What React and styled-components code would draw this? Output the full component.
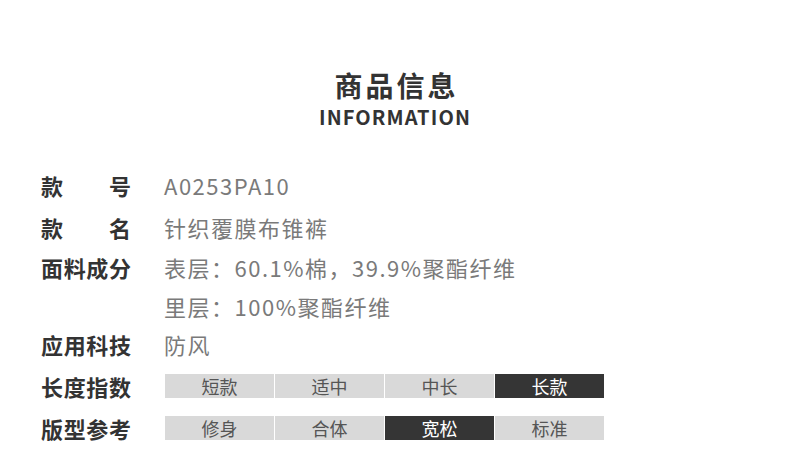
import React from 'react';
import styled, { createGlobalStyle } from 'styled-components';

const GlobalStyle = createGlobalStyle`
  html, body {
    margin: 0;
    padding: 0;
    background: #ffffff;
  }
  body {
    font-family: "Noto Sans CJK SC", "Noto Sans", sans-serif;
  }
`;

// Page wrapper
const Page = styled.div`
  width: 790px;
  height: 476px;
  padding-top: 67px;
  box-sizing: border-box;
  background: #fff;
`;

const Header = styled.header`
  display: flex;
  flex-direction: column;
  align-items: center;
`;

const Title = styled.h1`
  margin: 0 0 0 3px;
  font-size: 28px;
  line-height: 36px;
  font-weight: 700;
  letter-spacing: 3px;
  color: #333;
`;

const SubTitle = styled.div`
  margin-top: 2px;
  font-size: 20px;
  line-height: 24px;
  font-weight: 600;
  letter-spacing: 1.1px;
  color: #333;
`;

const InfoList = styled.div`
  display: flex;
  flex-direction: column;
  margin-top: 35px;
  padding-left: 41px;
`;

const Row = styled.div`
  display: flex;
  align-items: flex-start;
  min-height: ${({ height }) => height || 42}px;
`;

const LabelBox = styled.div`
  width: 90px;
  margin-right: 33px;
  display: flex;
  justify-content: space-between;
  font-size: 22px;
  line-height: ${({ lh }) => lh || 42}px;
  font-weight: 700;
  color: #333;
`;

const Values = styled.div`
  display: flex;
  flex-direction: column;
`;

const ValueLine = styled.div`
  font-size: 22px;
  line-height: ${({ lh }) => lh || 42}px;
  letter-spacing: 1.5px;
  color: #7a7a7a;
  white-space: nowrap;
`;

const Scale = styled.div`
  margin-top: 9px;
  margin-left: 1px;
  display: grid;
  grid-template-columns: repeat(4, 109px);
  column-gap: 1px;
`;

const ScaleCell = styled.div`
  height: 24px;
  display: flex;
  align-items: center;
  justify-content: center;
  font-size: 18px;
  background: ${({ active }) => (active ? '#353535' : '#d9d9d9')};
  color: ${({ active }) => (active ? '#fff' : '#555')};
`;

const Label = ({ text, lh }) => (
  <LabelBox lh={lh}>
    {text.split('').map((ch, i) => (
      <span key={i}>{ch}</span>
    ))}
  </LabelBox>
);

const ScaleRow = ({ label, options, active }) => (
  <Row>
    <Label text={label} />
    <Scale>
      {options.map((o) => (
        <ScaleCell key={o} active={o === active}>{o}</ScaleCell>
      ))}
    </Scale>
  </Row>
);

export default function App() {
  return (
    <>
      <GlobalStyle />
      <Page>
        <Header>
          <Title>商品信息</Title>
          <SubTitle>INFORMATION</SubTitle>
        </Header>
        <InfoList>
          <Row>
            <Label text="款号" />
            <Values><ValueLine>A0253PA10</ValueLine></Values>
          </Row>
          <Row>
            <Label text="款名" />
            <Values><ValueLine>针织覆膜布锥裤</ValueLine></Values>
          </Row>
          <Row>
            <Label text="面料成分" lh={39} />
            <Values>
              <ValueLine lh={39}>表层：60.1%棉，39.9%聚酯纤维</ValueLine>
              <ValueLine lh={39}>里层：100%聚酯纤维</ValueLine>
            </Values>
          </Row>
          <Row height={39}>
            <Label text="应用科技" lh={36} />
            <Values><ValueLine lh={36}>防风</ValueLine></Values>
          </Row>
          <ScaleRow label="长度指数" options={['短款', '适中', '中长', '长款']} active="长款" />
          <ScaleRow label="版型参考" options={['修身', '合体', '宽松', '标准']} active="宽松" />
        </InfoList>
      </Page>
    </>
  );
}
